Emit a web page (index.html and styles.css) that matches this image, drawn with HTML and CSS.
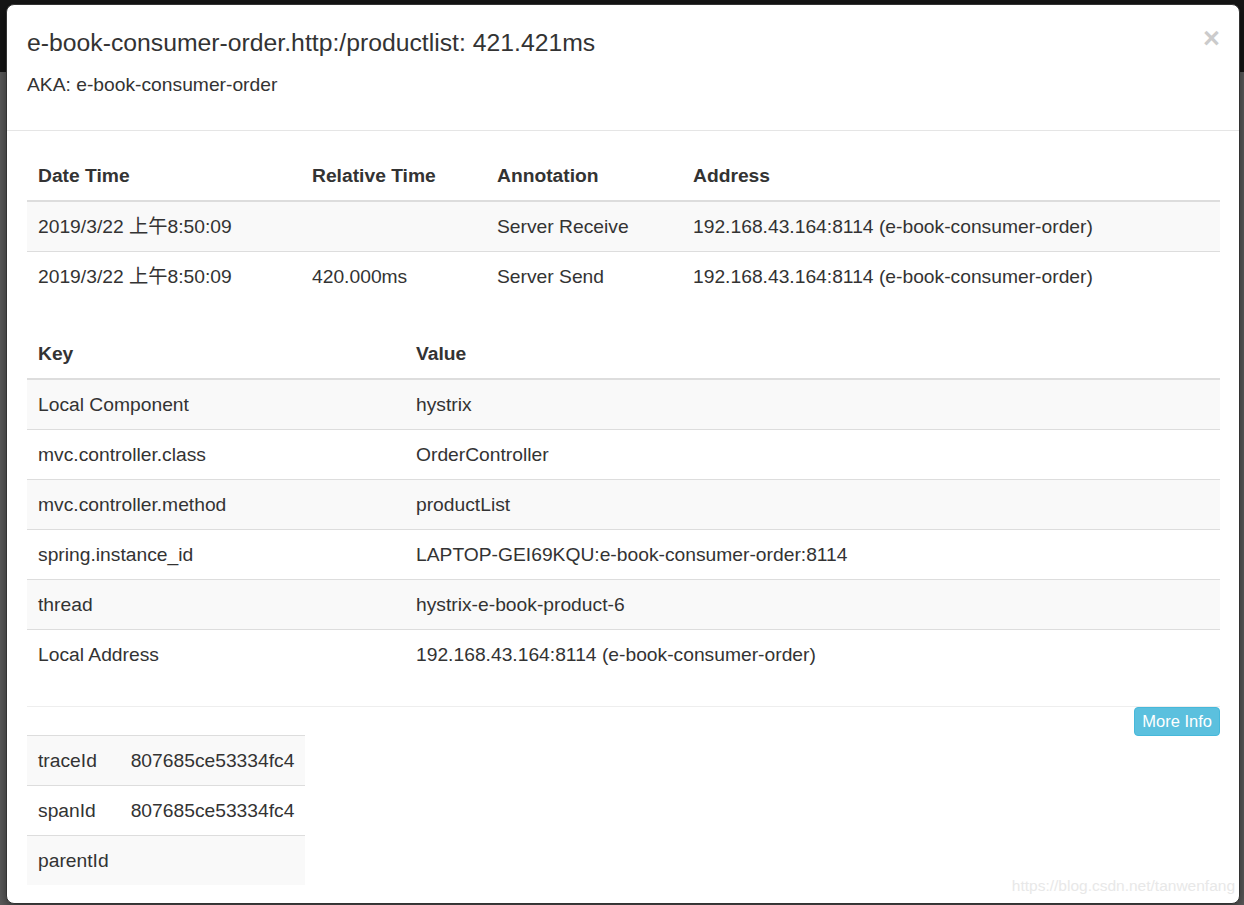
FILE: index.html
```html
<!DOCTYPE html>
<html>
<head>
<meta charset="utf-8">
<title>Span</title>
<link rel="stylesheet" href="styles.css">
</head>
<body>
<div class="page">
  <div class="modal">
    <div class="modal-header">
      <div class="header-top">
        <h4 class="modal-title">e-book-consumer-order.http:/productlist: 421.421ms</h4>
        <button class="close" type="button">×</button>
      </div>
      <div class="aka">AKA: e-book-consumer-order</div>
    </div>
    <div class="modal-body">
      <table class="table table-annotations">
        <thead>
          <tr><th class="c-date">Date Time</th><th class="c-rel">Relative Time</th><th class="c-ann">Annotation</th><th>Address</th></tr>
        </thead>
        <tbody>
          <tr><td>2019/3/22 上午8:50:09</td><td></td><td>Server Receive</td><td>192.168.43.164:8114 (e-book-consumer-order)</td></tr>
          <tr><td>2019/3/22 上午8:50:09</td><td>420.000ms</td><td>Server Send</td><td>192.168.43.164:8114 (e-book-consumer-order)</td></tr>
        </tbody>
      </table>
      <table class="table table-tags">
        <thead>
          <tr><th class="c-key">Key</th><th>Value</th></tr>
        </thead>
        <tbody>
          <tr><td>Local Component</td><td>hystrix</td></tr>
          <tr><td>mvc.controller.class</td><td>OrderController</td></tr>
          <tr><td>mvc.controller.method</td><td>productList</td></tr>
          <tr><td>spring.instance_id</td><td>LAPTOP-GEI69KQU:e-book-consumer-order:8114</td></tr>
          <tr><td>thread</td><td>hystrix-e-book-product-6</td></tr>
          <tr><td>Local Address</td><td>192.168.43.164:8114 (e-book-consumer-order)</td></tr>
        </tbody>
      </table>
      <div class="divider"></div>
      <div class="btn-row"><button class="btn-info" type="button">More Info</button></div>
      <table class="table table-ids">
        <tbody>
          <tr><td>traceId</td><td>807685ce53334fc4</td></tr>
          <tr><td>spanId</td><td>807685ce53334fc4</td></tr>
          <tr><td>parentId</td><td></td></tr>
        </tbody>
      </table>
    </div>
  </div>
  <div class="watermark">https://blog.csdn.net/tanwenfang</div>
</div>
</body>
</html>
```

FILE: styles.css
```css
html, body {
  margin: 0;
  padding: 0;
  height: 905px;
  overflow: hidden;
}
body {
  background: linear-gradient(#151515 0, #151515 72px, #5c5c5c 72px, #5c5c5c 100%);
  font-family: "Liberation Sans", Arial, "Noto Sans CJK SC", sans-serif;
  font-size: 19.25px;
  color: #333;
}
.page {
  position: relative;
  padding: 4px 0 0 6px;
  height: 901px;
}
.modal {
  width: 1234px;
  background: #fff;
  border: 1px solid #333;
  border-radius: 8px;
  box-sizing: border-box;
  height: 900px;
  box-shadow: 0 4px 12px rgba(0,0,0,.5);
}
.modal-header {
  padding: 20px 21px 31px 20px;
  border-bottom: 1px solid #e5e5e5;
}
.header-top {
  display: flex;
  justify-content: space-between;
  align-items: flex-start;
}
.modal-title {
  margin: 0;
  font-size: 24.75px;
  font-weight: normal;
  line-height: 35px;
  color: #333;
}
.close {
  background: none;
  border: 0;
  padding: 0;
  margin: -1px -2px 0 0;
  font-family: "Liberation Sans", Arial, sans-serif;
  font-size: 29px;
  font-weight: bold;
  line-height: 29px;
  color: #000;
  opacity: .2;
}
.aka {
  margin-top: 11px;
  line-height: 27.5px;
}
.modal-body {
  padding: 20px 19px 0 20px;
}
.table {
  width: 100%;
  border-collapse: collapse;
  border-spacing: 0;
  margin-bottom: 27px;
}
.table-annotations {
  margin-bottom: 28px;
}
.table th, .table td {
  padding: 11px 11px;
  line-height: 27px;
  text-align: left;
  vertical-align: top;
  border-top: 1px solid #ddd;
}
.table th {
  font-weight: bold;
  border-top: 0;
  border-bottom: 2px solid #ddd;
}
.table tbody tr:nth-child(odd) td {
  background: #f9f9f9;
}
.c-date { width: 252px; }
.c-rel { width: 163px; }
.c-ann { width: 174px; }
.c-key { width: 356px; }
.divider {
  border-top: 1px solid #eee;
  margin-top: 1px;
}
.btn-row {
  display: flex;
  justify-content: flex-end;
  height: 28px;
}
.btn-info {
  height: 29px;
  padding: 0 7px;
  background: #5bc0de;
  border: 1px solid #46b8da;
  border-radius: 4px;
  color: #fff;
  font-family: "Liberation Sans", Arial, sans-serif;
  font-size: 16.5px;
  line-height: 27px;
}
.table-ids {
  width: auto;
  margin-bottom: 0;
}
.watermark {
  position: absolute;
  right: 9px;
  top: 876px;
  font-size: 15.5px;
  color: #e8e8e8;
  line-height: 20px;
}
```
